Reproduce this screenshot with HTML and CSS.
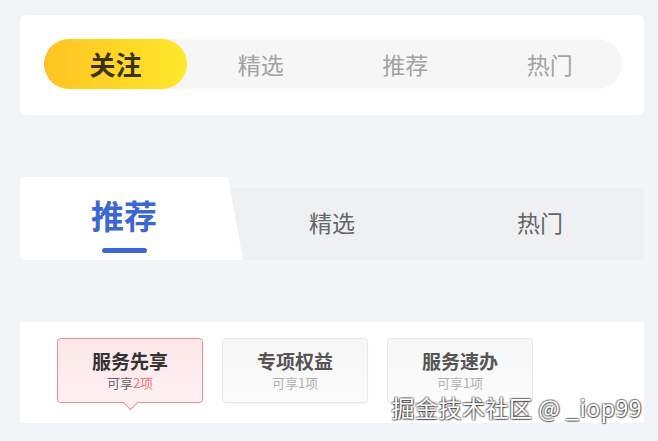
FILE: index.html
```html
<!DOCTYPE html>
<html lang="zh-CN">
<head>
<meta charset="utf-8">
<link rel="stylesheet" href="styles.css">
</head>
<body>
<div class="page">
  <section class="card card-pill">
    <div class="track">
      <div class="ptab active">关注</div>
      <div class="ptab">精选</div>
      <div class="ptab">推荐</div>
      <div class="ptab">热门</div>
    </div>
  </section>

  <section class="card-slant">
    <div class="stab active"><span class="stab-text">推荐</span><span class="bar"></span></div>
    <div class="stab">精选</div>
    <div class="stab">热门</div>
  </section>

  <section class="card card-boxes">
    <div class="box active">
      <div class="box-title">服务先享</div>
      <div class="box-sub">可享<em>2项</em></div>
    </div>
    <div class="box">
      <div class="box-title">专项权益</div>
      <div class="box-sub">可享1项</div>
    </div>
    <div class="box">
      <div class="box-title">服务速办</div>
      <div class="box-sub">可享1项</div>
    </div>
  </section>

  <div class="watermark">掘金技术社区 @ _iop99</div>
</div>
</body>
</html>
```

FILE: styles.css
```css
* { box-sizing: border-box; }
html, body { margin: 0; padding: 0; }
body {
  background: #f1f5f8;
  font-family: "Noto Sans CJK SC", "Noto Sans", sans-serif;
  width: 658px;
  height: 441px;
  overflow: hidden;
}
.page {
  position: relative;
  height: 441px;
  padding: 15px 14px 0 20px;
}
.card { background: #fff; }

/* card 1 */
.card-pill {
  height: 100px;
  border-radius: 6px;
  padding: 24px 22px 0 24px;
}
.track {
  display: grid;
  grid-template-columns: repeat(4, 1fr);
  height: 50px;
  background: #f6f6f6;
  border-radius: 25px;
}
.ptab {
  display: flex;
  align-items: center;
  justify-content: center;
  font-size: 23px;
  line-height: 1;
  color: #a2a2a2;
  padding-top: 1px;
}
.ptab.active {
  width: 143px;
  background: linear-gradient(90deg, #ffc424 0%, #ffd726 55%, #ffe82c 100%);
  border-radius: 25px;
  color: #3a3210;
  font-weight: 700;
  font-size: 26px;
  padding-top: 0;
}

/* card 2 */
.card-slant {
  margin-top: 62px;
  height: 83px;
  display: grid;
  grid-template-columns: repeat(3, 1fr);
  background: linear-gradient(to bottom, transparent 11px, #eff0f2 11px);
}
.stab {
  display: flex;
  align-items: center;
  justify-content: center;
  padding-top: 11px;
  padding-bottom: 4px;
  font-size: 23px;
  line-height: 1;
  color: #666;
}
.stab.active {
  flex-direction: column;
  justify-content: flex-start;
  padding: 22px 15px 0 0;
  margin-right: -15px;
  background: #fff;
  border-radius: 4px 0 0 4px;
  clip-path: polygon(0 0, calc(100% - 15px) 0, 100% 100%, 0 100%);
  position: relative;
  z-index: 1;
}
.stab-text {
  font-size: 33px;
  font-weight: 700;
  color: #3c66d2;
  line-height: 1;
}
.bar {
  display: block;
  width: 45px;
  height: 5px;
  margin-top: 16px;
  border-radius: 3px;
  background: #3c66d2;
}

/* card 3 */
.card-boxes {
  margin-top: 62px;
  height: 101px;
  border-radius: 2px;
  display: flex;
  gap: 19px;
  padding: 16px 0 0 37px;
}
.box {
  position: relative;
  width: 146px;
  height: 65px;
  border: 1px solid #e8e8e8;
  border-radius: 4px;
  background: linear-gradient(to bottom, #f7f7f7, #fbfbfb);
  box-shadow: 0 1px 2px rgba(0, 0, 0, 0.04);
  display: flex;
  flex-direction: column;
  align-items: center;
  padding-top: 12px;
}
.box-title {
  font-size: 19px;
  line-height: 19px;
  font-weight: 700;
  color: #555;
}
.box-sub {
  margin-top: 6px;
  font-size: 13px;
  line-height: 13px;
  color: #b0b0b0;
}
.box.active {
  border-color: #ec8e95;
  background: linear-gradient(to bottom, #fde6e8, #fff1f2);
}
.box.active .box-title { color: #333; }
.box.active .box-sub { color: #666; }
.box-sub em { font-style: normal; color: #f0707c; }
.box.active::after {
  content: "";
  position: absolute;
  left: 50%;
  bottom: -6px;
  width: 10px;
  height: 10px;
  margin-left: -5px;
  background: #fff1f2;
  border-right: 1px solid #ec8e95;
  border-bottom: 1px solid #ec8e95;
  transform: rotate(45deg);
}

/* watermark overlay */
.watermark {
  position: absolute;
  right: 16px;
  bottom: 22px;
  font-size: 23px;
  line-height: 1;
  letter-spacing: 0.5px;
  color: #fff;
  white-space: nowrap;
  text-shadow:
    1px 1px 1px rgba(0,0,0,0.55),
    -1px -1px 1px rgba(0,0,0,0.35),
    1px -1px 1px rgba(0,0,0,0.35),
    -1px 1px 1px rgba(0,0,0,0.35);
}
```
